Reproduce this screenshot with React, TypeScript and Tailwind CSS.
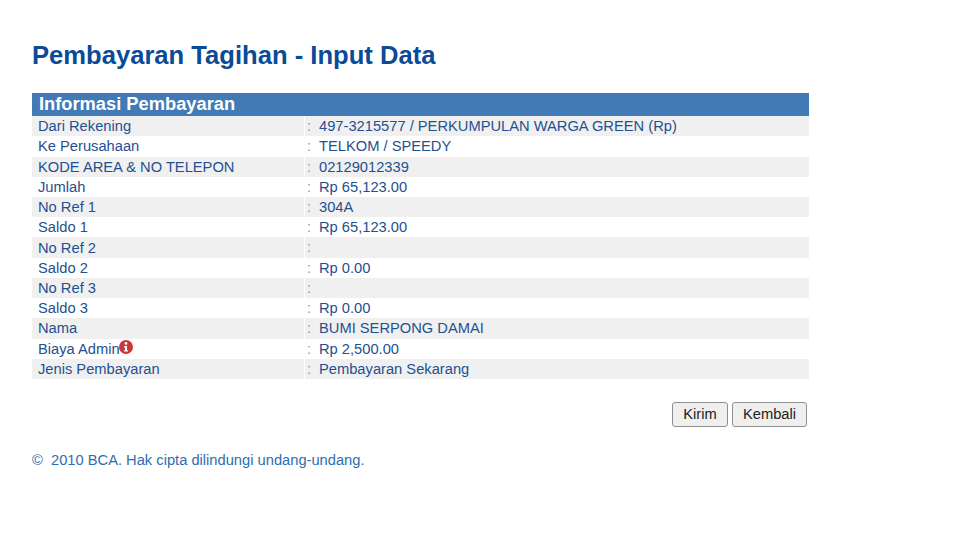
const rows = [
  { label: 'Dari Rekening', value: '497-3215577 / PERKUMPULAN WARGA GREEN (Rp)' },
  { label: 'Ke Perusahaan', value: 'TELKOM / SPEEDY' },
  { label: 'KODE AREA & NO TELEPON', value: '02129012339' },
  { label: 'Jumlah', value: 'Rp 65,123.00' },
  { label: 'No Ref 1', value: '304A' },
  { label: 'Saldo 1', value: 'Rp 65,123.00' },
  { label: 'No Ref 2', value: '' },
  { label: 'Saldo 2', value: 'Rp 0.00' },
  { label: 'No Ref 3', value: '' },
  { label: 'Saldo 3', value: 'Rp 0.00' },
  { label: 'Nama', value: 'BUMI SERPONG DAMAI' },
  { label: 'Biaya Admin', value: 'Rp 2,500.00', info: true },
  { label: 'Jenis Pembayaran', value: 'Pembayaran Sekarang' },
]

const InfoIcon = () => (
  <svg width="14" height="14" viewBox="0 0 14 14" className="mb-[3px] ml-[-1px] shrink-0">
    <circle cx="7" cy="7" r="7" fill="#c9373c" />
    <circle cx="7" cy="3.4" r="1.4" fill="#fff" />
    <path d="M5 6h3v4.2h1v1.3H5v-1.3h1V7.3H5z" fill="#fff" />
  </svg>
)

const App = () => {
  return (
    <div className="min-h-[553px] bg-white pl-[32px] pt-[41px] font-['Liberation_Sans',Arial,sans-serif] text-[14.7px] text-[#1f5090]">
      <h1 className="h-[28px] text-[25.6px] leading-[28px] font-bold text-[#0b4a97]">
        Pembayaran Tagihan - Input Data
      </h1>

      <div className="mt-[24px] w-[777px]">
        {/* Header */}
        <div className="h-[23.1px] bg-[#417ab5] pl-[7px] text-[18.3px] leading-[22px] font-bold text-white">
          Informasi Pembayaran
        </div>

        {/* Rows */}
        <div className="flex flex-col">
          {rows.map((row, i) => (
            <div key={row.label} className="flex h-[20.22px] leading-[20px]">
              <div className={`flex w-[272px] items-center pl-[6px] ${i % 2 === 0 ? 'bg-[#f0f0f0]' : ''}`}>
                {row.label}
                {row.info && <InfoIcon />}
              </div>
              <div className={`ml-[1px] flex flex-1 ${i % 2 === 0 ? 'bg-[#f0f0f0]' : ''}`}>
                <span className="w-[14px] pl-[2px] text-[#8a9bb0]">:</span>
                <span>{row.value}</span>
              </div>
            </div>
          ))}
        </div>

        {/* Buttons */}
        <div className="mt-[23px] flex justify-end gap-[4px] pr-[2px]">
          <button className="h-[25px] w-[56px] rounded-[3px] border border-[#8f8f8f] bg-[#efefef] text-[14.7px] text-[#222]">
            Kirim
          </button>
          <button className="h-[25px] w-[75px] rounded-[3px] border border-[#8f8f8f] bg-[#efefef] text-[14.7px] text-[#222]">
            Kembali
          </button>
        </div>
      </div>

      {/* Footer */}
      <p className="mt-[23px] text-[14.7px] leading-[20px] text-[#2f6db0]">
        ©&nbsp; 2010 BCA. Hak cipta dilindungi undang-undang.
      </p>
    </div>
  )
}

export default App
